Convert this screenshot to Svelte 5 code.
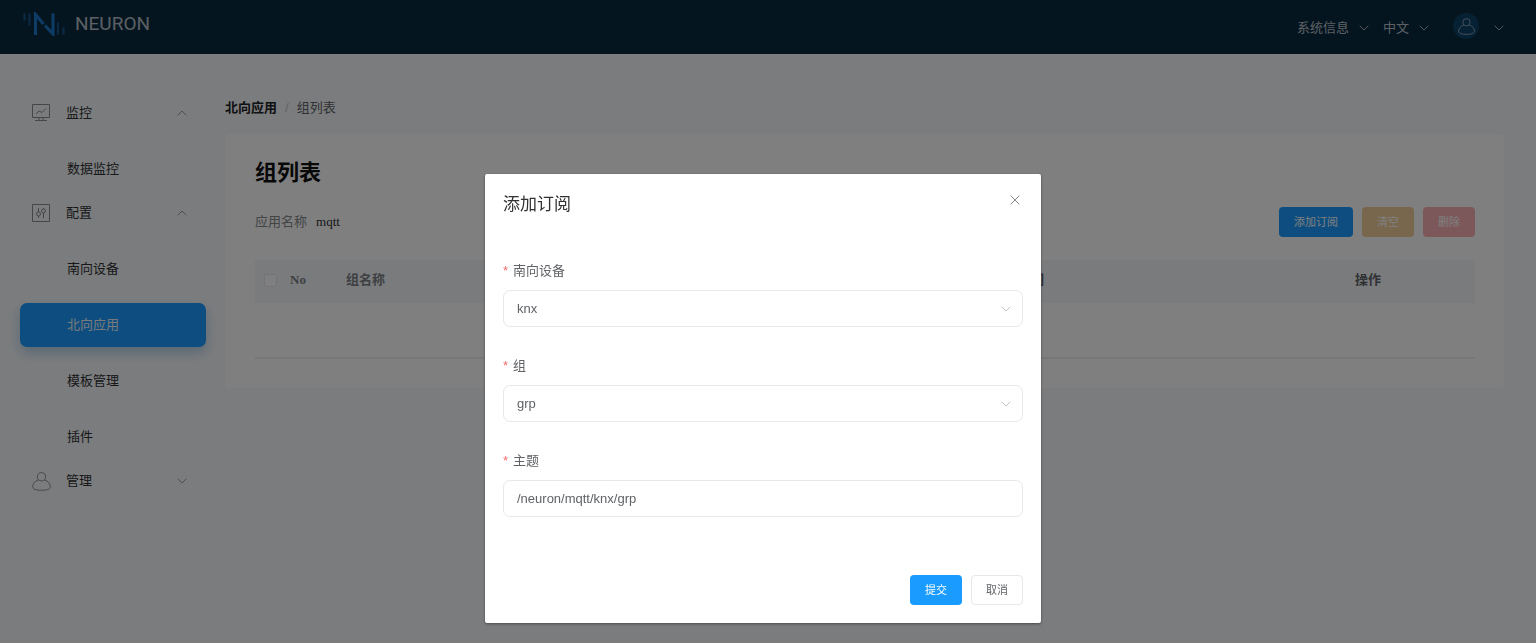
<script>
  const groups = [
    { name: '监控', icon: 'monitor', open: true, items: ['数据监控'] },
    { name: '配置', icon: 'config', open: true, items: ['南向设备', '北向应用', '模板管理', '插件'] },
    { name: '管理', icon: 'user', open: false, items: [] }
  ];
  const active = '北向应用';
  let device = $state('knx');
  let group = $state('grp');
  let topic = $state('/neuron/mqtt/knx/grp');
</script>

{#snippet chevron(up)}
  <svg class="chevron" width="10" height="6" viewBox="0 0 10 6" aria-hidden="true">
    <path d={up ? 'M.7 5.3 5 1l4.3 4.3' : 'M.7.7 5 5 9.3.7'} />
  </svg>
{/snippet}

{#snippet person(size)}
  <svg width={size} height={size} viewBox="0 0 20 20" aria-hidden="true">
    <circle cx="10" cy="5" r="4.3" />
    <path d="M6.7 8.400C3 9.500.7 12.500.7 15.500.7 18.400 4.500 19.200 10 19.200s9.300-.8 9.300-3.700c0-3-2.300-6-6-7.100" />
  </svg>
{/snippet}

<div class="page">
  <header>
    <a class="brand" href="#home">
      <svg width="42" height="24" viewBox="0 0 42 24" aria-hidden="true">
        <g fill="none" stroke-width="2">
          <path stroke="#16578f" d="M1.500 1.500v7M6.500 1.500v12M35 10.500v12M40.500 15.500v7" />
          <path stroke="#1a7bcc" stroke-width="3" d="M12.500 23V2.500l8 9.500M22 13.500l8 8.500V1.500" />
        </g>
      </svg>
      <span>NEURON</span>
    </a>
    <nav class="tools">
      <button class="tool">系统信息 {@render chevron(false)}</button>
      <button class="tool">中文 {@render chevron(false)}</button>
      <button class="tool account" aria-label="admin">
        <span class="avatar">{@render person(17)}</span>
        {@render chevron(false)}
      </button>
    </nav>
  </header>

  <div class="body">
    <aside>
      {#each groups as g}
        <button class="group">
          <span class="group-icon">
            {#if g.icon === 'monitor'}
              <svg width="18" height="18" viewBox="0 0 18 18" aria-hidden="true">
                <path d="M.5.5h17v13H.5zM7 13.500v3M11 13.500v3M3 16.500h12M4 10l3-3 3 1.500L14 4.500" />
              </svg>
            {:else if g.icon === 'config'}
              <svg width="18" height="18" viewBox="0 0 18 18" aria-hidden="true">
                <path d="M.5.5h17v17H.5zM6.500 4v4M6.500 12v2M11.500 4v1M11.500 9v5" />
                <circle cx="6.500" cy="10" r="2" />
                <circle cx="11.500" cy="7" r="2" />
              </svg>
            {:else}
              {@render person(19)}
            {/if}
          </span>
          <span class="group-name">{g.name}</span>
          {@render chevron(g.open)}
        </button>
        {#each g.items as item}
          <a class="item" class:active={item === active} href="#{item}">{item}</a>
        {/each}
      {/each}
    </aside>

    <main>
      <nav class="crumbs">
        <a href="#north">北向应用</a><i>/</i><span>组列表</span>
      </nav>
      <section class="card">
        <h1>组列表</h1>
        <div class="bar">
          <p><span>应用名称</span>mqtt</p>
          <div class="actions">
            <button class="btn primary">添加订阅</button>
            <button class="btn warning">清空</button>
            <button class="btn danger">删除</button>
          </div>
        </div>
        <table>
          <thead>
            <tr>
              <th class="check"><input type="checkbox" aria-label="No" /></th>
              <th class="no">No</th>
              <th>组名称</th>
              <th class="time">时间</th>
              <th class="op">操作</th>
            </tr>
          </thead>
          <tbody>
            <tr><td colspan="5"></td></tr>
          </tbody>
        </table>
      </section>
    </main>
  </div>
</div>

<div class="overlay">
  <div class="dialog" role="dialog" aria-modal="true" aria-labelledby="dialog-title">
    <div class="dialog-head">
      <h2 id="dialog-title">添加订阅</h2>
      <button class="close" aria-label="×">
        <svg width="10" height="10" viewBox="0 0 10 10" aria-hidden="true"><path d="m.7.7 8.6 8.6M9.3.7.7 9.3" /></svg>
      </button>
    </div>
    <form onsubmit={(e) => e.preventDefault()}>
      <div class="field">
        <label for="device">南向设备</label>
        <div class="control">
          <select id="device" bind:value={device}><option>knx</option></select>
          {@render chevron(false)}
        </div>
      </div>
      <div class="field">
        <label for="group">组</label>
        <div class="control">
          <select id="group" bind:value={group}><option>grp</option></select>
          {@render chevron(false)}
        </div>
      </div>
      <div class="field">
        <label for="topic">主题</label>
        <div class="control">
          <input id="topic" type="text" bind:value={topic} />
        </div>
      </div>
      <div class="dialog-foot">
        <button class="btn primary" type="submit">提交</button>
        <button class="btn plain" type="button">取消</button>
      </div>
    </form>
  </div>
</div>

<style>
  :global(body) {
    margin: 0;
    background: #f6f9fc;
  }
  * {
    box-sizing: border-box;
  }
  .page,
  .overlay {
    font: 13px/20px 'Liberation Sans', 'Noto Sans CJK SC', sans-serif;
    color: #303133;
  }
  .page {
    min-height: 100vh;
  }
  button,
  input,
  select {
    font: inherit;
    color: inherit;
  }
  button {
    margin: 0;
    padding: 0;
    border: 0;
    background: none;
  }
  a {
    color: inherit;
    text-decoration: none;
  }
  svg {
    flex: none;
    fill: none;
    stroke: currentColor;
  }
  .chevron {
    color: #9a9da3;
  }

  header {
    display: flex;
    justify-content: space-between;
    height: 54px;
    padding: 0 32px 0 23px;
    background: #0a2a40;
    color: #b8c1c9;
  }
  .brand {
    display: flex;
    align-items: center;
    gap: 10px;
    height: 48px;
    font: 19px/24px Roboto, sans-serif;
  }
  .tools,
  .tool {
    display: flex;
    align-items: center;
  }
  .tools {
    gap: 14px;
    padding-top: 2px;
  }
  .tool {
    gap: 10px;
  }
  .tool .chevron {
    color: #a4afb8;
  }
  .account {
    gap: 15px;
    margin-left: 10px;
  }
  .avatar {
    display: grid;
    place-items: center;
    width: 26px;
    height: 26px;
    margin-bottom: 4px;
    border-radius: 50%;
    background: #0c4068;
    color: #a0b4c4;
  }

  .body {
    display: flex;
    gap: 19px;
    padding: 37px 32px 0 20px;
  }
  aside {
    flex: none;
    width: 186px;
  }
  .group,
  .item {
    display: flex;
    align-items: center;
    width: 100%;
    height: 44px;
    border-radius: 7px;
  }
  .group {
    padding: 0 19px 0 12px;
    text-align: left;
  }
  .group-icon {
    display: flex;
    width: 34px;
    color: #8a8c90;
  }
  .group-name {
    flex: 1;
  }
  .item {
    margin-top: 12px;
    padding-left: 47px;
  }
  .item.active {
    background: #1a9bff;
    color: #f0f4f8;
    box-shadow: 0 6px 12px rgba(26, 120, 190, 0.3);
  }

  main {
    flex: 1;
    min-width: 0;
  }
  .crumbs {
    display: flex;
    gap: 8px;
    padding: 7px 0 16px;
    line-height: 20px;
    color: #606266;
  }
  .crumbs a {
    font-weight: 700;
    color: #202225;
  }
  .crumbs i {
    color: #c0c4ca;
    font-style: normal;
  }
  .card {
    padding: 24px 29px 29px 30px;
    border-radius: 4px;
    background: #fff;
  }
  h1 {
    margin: 0;
    font-size: 22px;
    line-height: 30px;
    color: #101010;
  }
  .bar {
    display: flex;
    align-items: center;
    justify-content: space-between;
    padding: 19px 0 23px;
  }
  .bar p {
    margin: 0;
    font-family: 'Liberation Serif', 'Noto Sans CJK SC', serif;
  }
  .bar p span {
    margin-right: 9px;
    color: #85888d;
  }
  .actions,
  .dialog-foot {
    display: flex;
    gap: 9px;
  }
  .btn {
    height: 30px;
    padding: 0 15px;
    border-radius: 4px;
    font-size: 11px;
  }
  .primary {
    background: #1a9bff;
    color: #fff;
  }
  .warning {
    background: #f0cf98;
    color: #fff;
  }
  .danger {
    background: #f8b0b4;
    color: #fff;
  }
  table {
    width: 100%;
    border-collapse: collapse;
    table-layout: fixed;
  }
  th {
    height: 43px;
    padding: 0 0 3px;
    background: #f4f7fb;
    font-family: 'Liberation Serif', 'Noto Sans CJK SC', serif;
    text-align: left;
    color: #7c7f85;
  }
  .check {
    width: 35px;
    padding-left: 9px;
  }
  .no {
    width: 56px;
  }
  .time {
    width: 30%;
    padding-left: 29px;
    color: #606266;
  }
  .op {
    width: 120px;
    color: #606266;
  }
  th input {
    display: block;
    appearance: none;
    width: 13px;
    height: 13px;
    margin: 0;
    border: 1px solid #e4e8ee;
    border-radius: 2px;
    background: #fff;
  }
  td {
    height: 55px;
    padding: 0;
    border-bottom: 2px solid #eeeff2;
  }

  .overlay {
    position: fixed;
    inset: 0;
    display: flex;
    align-items: flex-start;
    justify-content: center;
    padding: 174px 10px 0 0;
    background: rgba(0, 0, 0, 0.5);
  }
  .dialog {
    width: 556px;
    max-width: 100%;
    padding: 17px 18px 18px;
    border-radius: 2px;
    background: #fff;
    box-shadow: 0 1px 3px rgba(0, 0, 0, 0.4);
  }
  .dialog-head {
    display: flex;
    justify-content: space-between;
    margin-bottom: 41px;
  }
  h2 {
    margin: 0;
    font-size: 17px;
    font-weight: 400;
    line-height: 28px;
  }
  .close {
    display: grid;
    place-items: center;
    width: 16px;
    height: 18px;
    color: #85888e;
  }
  .field {
    margin-bottom: 28px;
    color: #606266;
  }
  .field label {
    display: block;
    margin-bottom: 8px;
    line-height: 22px;
  }
  .field label::before {
    content: '*';
    margin-right: 5px;
    color: #f56c6c;
  }
  .control {
    display: flex;
    align-items: center;
    height: 37px;
    padding-right: 11px;
    border: 1px solid #e6e8eb;
    border-radius: 7px;
  }
  .control select,
  .control input {
    flex: 1;
    min-width: 0;
    height: 34px;
    padding: 0 13px;
    border: 0;
    outline: 0;
    appearance: none;
    background: none;
  }
  .control .chevron {
    color: #c0c4cc;
  }
  .dialog-foot {
    justify-content: flex-end;
    padding-top: 30px;
  }
  .plain {
    padding: 0 14px;
    border: 1px solid #e6e8eb;
    color: #606266;
  }
</style>
